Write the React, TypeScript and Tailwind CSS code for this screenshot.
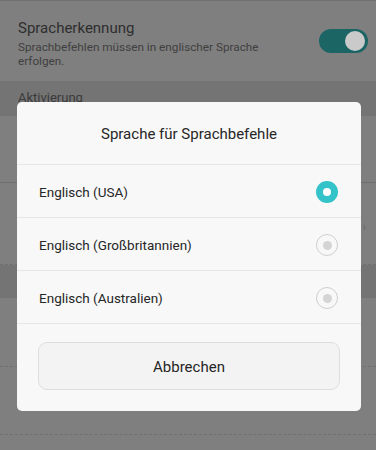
import React from "react";

const font = { fontFamily: "Roboto, 'Noto Sans', sans-serif" };

function Radio({ checked }: { checked: boolean }) {
  if (checked) {
    return (
      <div className="w-[22px] h-[22px] rounded-full bg-[#33c3c9] flex items-center justify-center">
        <div className="w-[8px] h-[8px] rounded-full bg-white" />
      </div>
    );
  }
  return (
    <div className="w-[22px] h-[22px] rounded-full border border-[#cfcfcf] flex items-center justify-center">
      <div className="w-[9px] h-[9px] rounded-full bg-[#d4d4d4]" />
    </div>
  );
}

export default function App() {
  const options = [
    { label: "Englisch (USA)", checked: true },
    { label: "Englisch (Großbritannien)", checked: false },
    { label: "Englisch (Australien)", checked: false },
  ];
  return (
    <div className="relative w-[376px] h-[450px] overflow-hidden bg-[#7f7f7f]" style={font}>
      {/* Background (dimmed) settings page */}
      <div className="flex flex-col">
        <div className="h-[81px] border-t border-[#707070] flex items-center pl-[18px] pr-[8px] bg-[#7f7f7f]">
          <div className="flex-1 flex flex-col pt-[4px]">
            <div className="text-[15px] leading-[20px] text-[#2e2e2e]">Spracherkennung</div>
            <div className="text-[11.75px] leading-[13.5px] text-[#404040] mt-[3px]">
              Sprachbefehlen müssen in englischer Sprache
              <br />
              erfolgen.
            </div>
          </div>
          <div className="w-[49px] h-[24px] rounded-full bg-[#1b6565] flex items-center justify-end pr-[3px]">
            <div className="w-[20px] h-[20px] rounded-full bg-[#cacaca]" />
          </div>
        </div>
        <div className="h-[35px] bg-[#747474] pl-[18px] pt-[7px] text-[13px] text-[#3a3a3a]">Aktivierung</div>
        <div className="h-[67px] border-b border-[#6e6e6e]" />
        <div className="h-[82px] border-b border-dashed border-[#707070] relative">
          <span className="absolute right-[10px] top-[35px] text-[12px] text-[#666]">›</span>
        </div>
        <div className="h-[33px] bg-[#747474]" />
        <div className="h-[69px] border-b border-dashed border-[#707070]" />
        <div className="h-[68px] border-b border-dashed border-[#707070]" />
      </div>

      {/* Dialog */}
      <div className="absolute left-[17px] top-[102px] w-[344px] h-[309px] bg-[#f8f8f8] rounded-[5px] flex flex-col">
        <div className="h-[63px] flex items-center justify-center text-[15px] text-[#262626] border-b border-[#e6e6e6] pt-[2px]">
          Sprache für Sprachbefehle
        </div>
        {options.map((o) => (
          <div
            key={o.label}
            className="h-[53px] flex items-center justify-between pl-[22px] pr-[23px] border-b border-[#e6e6e6] pt-[2px]"
          >
            <span className="text-[13.5px] text-[#262626]">{o.label}</span>
            <Radio checked={o.checked} />
          </div>
        ))}
        <div className="flex-1 flex items-start pt-[18px] px-[21px]">
          <div className="w-full h-[48px] rounded-[9px] border border-[#dedede] bg-[#f3f3f3] flex items-center justify-center text-[15px] text-[#262626] pt-[2px]">
            Abbrechen
          </div>
        </div>
      </div>
    </div>
  );
}
